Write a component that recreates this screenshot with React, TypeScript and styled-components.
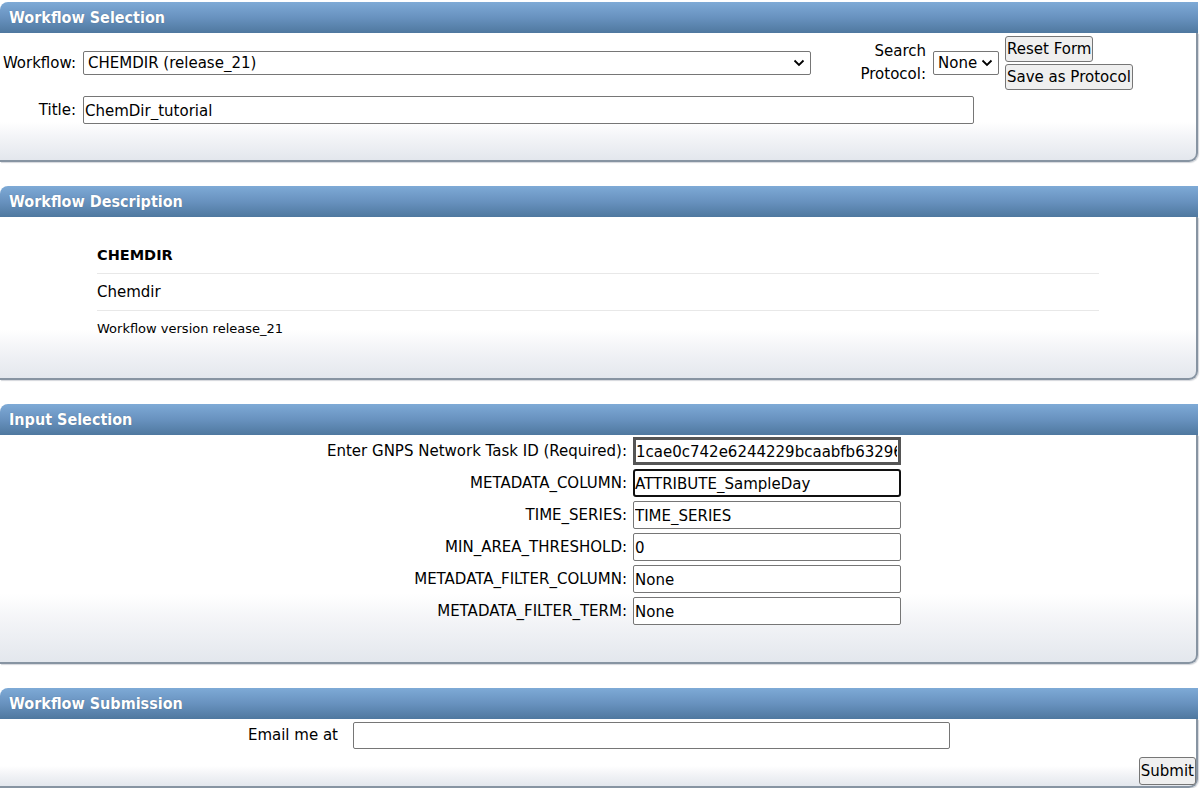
import { FC } from "react"
import styled, { createGlobalStyle } from "styled-components"

const GlobalStyle = createGlobalStyle`
  body {
    margin: 0;
    padding-top: 2px;
    background: #ffffff;
    font-family: "DejaVu Sans", Verdana, sans-serif;
    font-size: 15px;
    color: #000;
  }
`

const Panel = styled.section<{ $bodyHeight: number; $last?: boolean }>`
  width: 1198px;
  margin-bottom: ${(p) => (p.$last ? 0 : 24)}px;
  & > div:last-child {
    height: ${(p) => p.$bodyHeight}px;
  }
`

const PanelHeader = styled.div`
  height: 31px;
  line-height: 31px;
  padding-left: 9px;
  border-top-left-radius: 8px;
  background: linear-gradient(to bottom, #7eaad6 0%, #6892bf 50%, #4f789f 100%);
  color: #ffffff;
  font-family: "DejaVu Sans Condensed", "DejaVu Sans", sans-serif;
  font-stretch: condensed;
  font-weight: bold;
  font-size: 16px;
  text-shadow: 0 0 1px rgba(0, 0, 0, 0.3);
`

const PanelBody = styled.div`
  box-sizing: border-box;
  background: linear-gradient(to bottom, #ffffff 0%, #ffffff 70%, #f3f4f7 82%, #e3e7ed 100%);
  border-bottom: 2px solid #8794a2;
  border-right: 2px solid #8794a2;
  border-bottom-right-radius: 9px;
  box-shadow: 1px 1px 1px rgba(80, 90, 110, 0.25);
`

const Label = styled.label<{ $pad?: number }>`
  text-align: right;
  padding-right: ${(p) => p.$pad ?? 7}px;
  line-height: 23px;
  white-space: nowrap;
`

/* workflow selection */

const SelectionGrid = styled.div`
  display: grid;
  grid-template-columns: 83px 728px 122px 72px auto;
  align-items: center;
  padding-top: 3px;
`

const StyledSelect = styled.select<{ $width: number }>`
  width: ${(p) => p.$width}px;
  height: 24px;
  box-sizing: border-box;
  border: 1px solid #767676;
  border-radius: 2px;
  background: #fff;
  font-family: inherit;
  font-size: 15px;
  padding: 0 0 0 4px;
  appearance: none;
  background-image: url("data:image/svg+xml;utf8,<svg xmlns='http://www.w3.org/2000/svg' width='12' height='8' viewBox='0 0 12 8'><path d='M1.5 1.5 L6 6 L10.5 1.5' fill='none' stroke='black' stroke-width='1.8'/></svg>");
  background-repeat: no-repeat;
  background-position: right 5px center;
  color: #000;
`

const ButtonStack = styled.div`
  display: flex;
  flex-direction: column;
  align-items: flex-start;
  gap: 2px;
`

const FormButton = styled.button<{ $height?: number }>`
  height: ${(p) => p.$height ?? 26}px;
  box-sizing: border-box;
  border: 1px solid #767676;
  border-radius: 3px;
  background: #efefef;
  font-family: inherit;
  font-size: 15px;
  padding: 0 1px;
  color: #000;
`

const TextInput = styled.input<{ $width: number; $height?: number; $focus?: "strong" | "soft" }>`
  width: ${(p) => p.$width}px;
  height: ${(p) => p.$height ?? 28}px;
  box-sizing: border-box;
  border: 1px solid #767676;
  border-radius: 2px;
  font-family: inherit;
  font-size: 15px;
  padding: 2px 1px 0;
  color: #000;
  ${(p) => (p.$focus === "strong" ? "border: 3px solid #555; border-radius: 0; padding-left: 0;" : "")}
  ${(p) => (p.$focus === "soft" ? "border: 2px solid #101010; border-radius: 3px; padding-left: 0;" : "")}
`

const TitleRow = styled.div`
  display: grid;
  grid-template-columns: 83px auto;
  align-items: center;
  margin-top: 6px;
`

/* workflow description */

const DescTable = styled.div`
  width: 1002px;
  margin: 0 auto;
  padding-top: 20px;
`

const DescRow = styled.div<{ $small?: boolean; $bold?: boolean; $last?: boolean }>`
  height: 36px;
  line-height: 36px;
  font-size: ${(p) => (p.$small ? 13 : p.$bold ? 14.5 : 15)}px;
  font-weight: ${(p) => (p.$bold ? "bold" : "normal")};
  border-bottom: ${(p) => (p.$last ? "none" : "1px solid #e8e8e8")};
`

/* input selection */

const InputList = styled.div`
  display: flex;
  flex-direction: column;
  gap: 4px;
  padding-top: 2px;
`

const InputRow = styled.div`
  display: grid;
  grid-template-columns: 633px 268px;
  align-items: center;
`

/* submission */

const EmailRow = styled.div`
  display: grid;
  grid-template-columns: 353px auto;
  align-items: center;
  padding-top: 3px;
`

const SubmitRow = styled.div`
  display: flex;
  justify-content: flex-end;
  padding-top: 8px;
`

const inputs = [
  { label: "Enter GNPS Network Task ID (Required):", value: "1cae0c742e6244229bcaabfb63296b8a", focus: "strong" as const },
  { label: "METADATA_COLUMN:", value: "ATTRIBUTE_SampleDay", focus: "soft" as const },
  { label: "TIME_SERIES:", value: "TIME_SERIES" },
  { label: "MIN_AREA_THRESHOLD:", value: "0" },
  { label: "METADATA_FILTER_COLUMN:", value: "None" },
  { label: "METADATA_FILTER_TERM:", value: "None" },
]

const App: FC = () => {
  return (
    <>
      <GlobalStyle />
      <Panel $bodyHeight={129}>
        <PanelHeader>Workflow Selection</PanelHeader>
        <PanelBody>
          <SelectionGrid>
            <Label>Workflow:</Label>
            <StyledSelect $width={728} defaultValue="chemdir">
              <option value="chemdir">CHEMDIR (release_21)</option>
            </StyledSelect>
            <Label>
              Search
              <br />
              Protocol:
            </Label>
            <StyledSelect $width={66} defaultValue="none">
              <option value="none">None</option>
            </StyledSelect>
            <ButtonStack>
              <FormButton>Reset Form</FormButton>
              <FormButton>Save as Protocol</FormButton>
            </ButtonStack>
          </SelectionGrid>
          <TitleRow>
            <Label>Title:</Label>
            <TextInput $width={891} defaultValue="ChemDir_tutorial" />
          </TitleRow>
        </PanelBody>
      </Panel>

      <Panel $bodyHeight={163}>
        <PanelHeader>Workflow Description</PanelHeader>
        <PanelBody>
          <DescTable>
            <DescRow $bold>CHEMDIR</DescRow>
            <DescRow>Chemdir</DescRow>
            <DescRow $small $last>
              Workflow version release_21
            </DescRow>
          </DescTable>
        </PanelBody>
      </Panel>

      <Panel $bodyHeight={229}>
        <PanelHeader>Input Selection</PanelHeader>
        <PanelBody>
          <InputList>
            {inputs.map((row) => (
              <InputRow key={row.label}>
                <Label $pad={6}>{row.label}</Label>
                <TextInput $width={268} $focus={row.focus} defaultValue={row.value} />
              </InputRow>
            ))}
          </InputList>
        </PanelBody>
      </Panel>

      <Panel $bodyHeight={69} $last>
        <PanelHeader>Workflow Submission</PanelHeader>
        <PanelBody>
          <EmailRow>
            <Label $pad={15}>Email me at</Label>
            <TextInput $width={597} $height={27} />
          </EmailRow>
          <SubmitRow>
            <FormButton $height={28}>Submit</FormButton>
          </SubmitRow>
        </PanelBody>
      </Panel>
    </>
  )
}

export default App
